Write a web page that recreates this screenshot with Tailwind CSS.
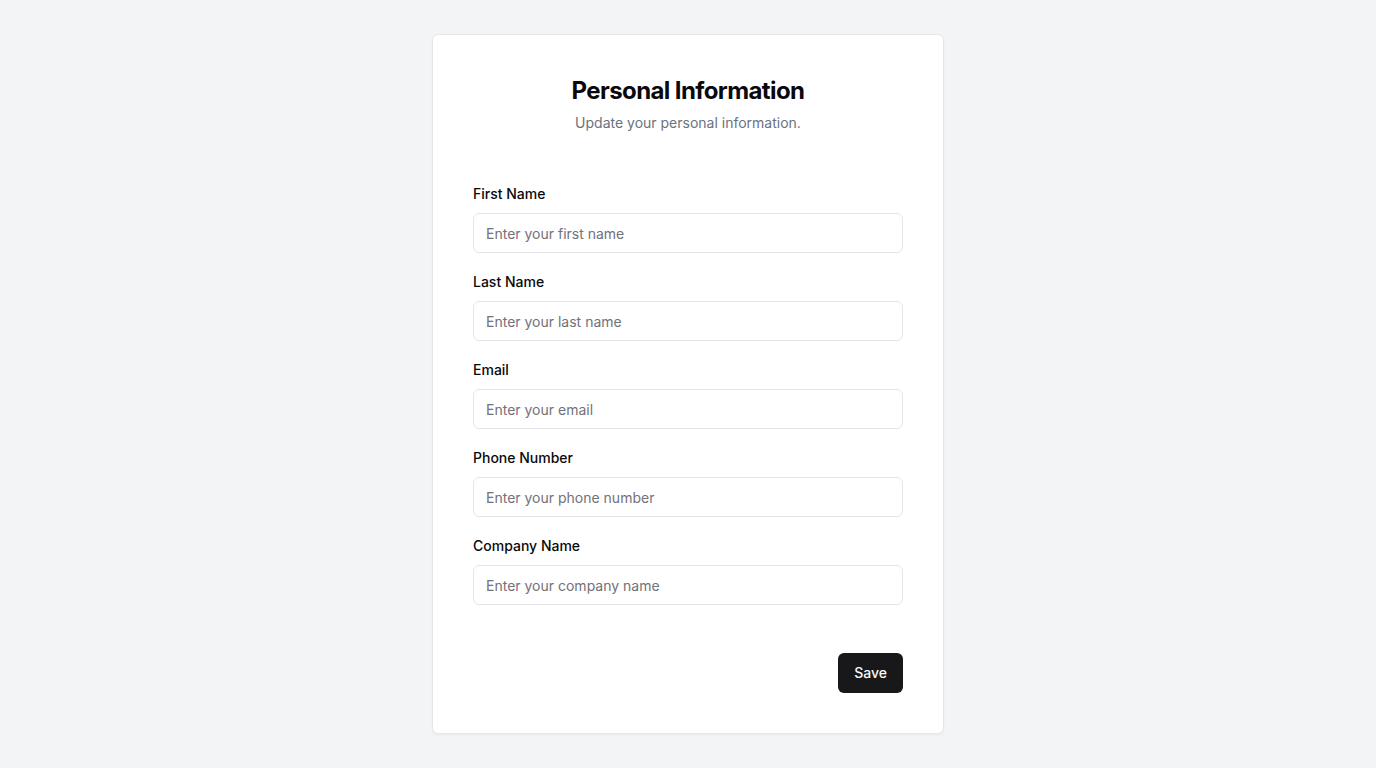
<!DOCTYPE html>
<html lang="en">
<head>
<meta charset="utf-8">
<meta name="viewport" content="width=device-width, initial-scale=1">
<title>Personal Information</title>
<script src="https://cdn.jsdelivr.net/npm/@tailwindcss/browser@4"></script>
</head>
<body class="flex min-h-screen items-center justify-center bg-[#f3f4f6] font-['Inter',sans-serif] text-[#09090b]">
<main class="w-full max-w-lg rounded-md border border-[#e5e7eb] bg-white p-10 shadow-xs">
  <header class="text-center">
    <h1 class="text-2xl font-bold tracking-tight">Personal Information</h1>
    <p class="mt-1.5 text-sm text-[#6b7280]">Update your personal information.</p>
  </header>
  <form class="mt-12">
    <div class="space-y-4">
      <div>
        <label for="first" class="text-sm font-medium">First Name</label>
        <input id="first" type="text" placeholder="Enter your first name" class="mt-2 block h-10 w-full rounded-md border border-[#e4e4e7] bg-white px-3 text-sm placeholder:text-[#71717a]">
      </div>
      <div>
        <label for="last" class="text-sm font-medium">Last Name</label>
        <input id="last" type="text" placeholder="Enter your last name" class="mt-2 block h-10 w-full rounded-md border border-[#e4e4e7] bg-white px-3 text-sm placeholder:text-[#71717a]">
      </div>
      <div>
        <label for="email" class="text-sm font-medium">Email</label>
        <input id="email" type="email" placeholder="Enter your email" class="mt-2 block h-10 w-full rounded-md border border-[#e4e4e7] bg-white px-3 text-sm placeholder:text-[#71717a]">
      </div>
      <div>
        <label for="phone" class="text-sm font-medium">Phone Number</label>
        <input id="phone" type="tel" placeholder="Enter your phone number" class="mt-2 block h-10 w-full rounded-md border border-[#e4e4e7] bg-white px-3 text-sm placeholder:text-[#71717a]">
      </div>
      <div>
        <label for="company" class="text-sm font-medium">Company Name</label>
        <input id="company" type="text" placeholder="Enter your company name" class="mt-2 block h-10 w-full rounded-md border border-[#e4e4e7] bg-white px-3 text-sm placeholder:text-[#71717a]">
      </div>
    </div>
    <div class="mt-12 flex justify-end">
      <button type="submit" class="h-10 rounded-md bg-[#18181b] px-4 text-sm font-medium text-[#fafafa]">Save</button>
    </div>
  </form>
</main>
</body>
</html>
